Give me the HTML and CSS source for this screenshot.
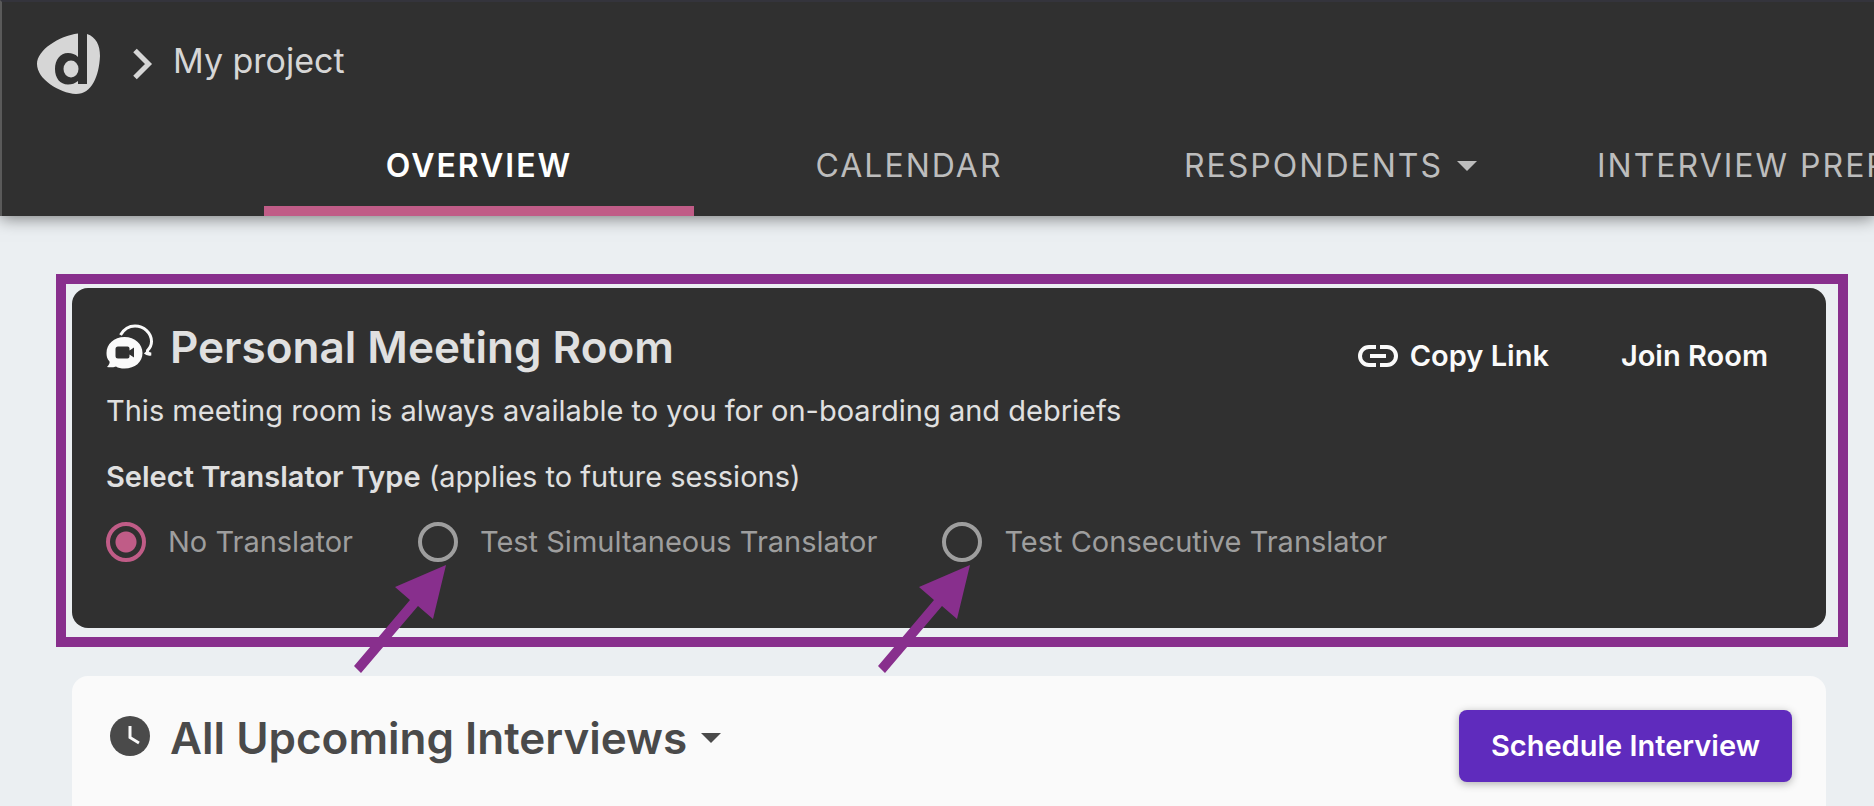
FILE: index.html
```html
<!DOCTYPE html>
<html lang="en">
<head>
    <meta charset="UTF-8">
    <meta name="viewport" content="width=device-width, initial-scale=1.0">
    <title>My project</title>
    <link rel="stylesheet" href="styles.css">
</head>
<body>
    <header class="header">
        <div class="breadcrumb">
            <a href="#" class="logo" aria-label="Home">
                <svg width="64" height="62" viewBox="0 0 64 62" fill="#d6d6d6">
                    <path d="M41 0.5V24C38 21 35 20 31 20C23 20 18 27 18 36C18 45 23 51.500 31 51.500C35 51.500 38 50.500 41 48V51H50V1C59 4 63 12 63 23C62 43 55 61 39 61C22 60 0 46 0 31C0 17 22 3 41 0.500Z"/>
                    <ellipse cx="34" cy="36" rx="7.500" ry="8.500"/>
                </svg>
            </a>
            <svg class="chevron" width="20" height="32" viewBox="0 0 20 32" fill="none" stroke="#d6d6d6" stroke-width="5">
                <path d="M2 2.500L15.500 16L2 29.500"/>
            </svg>
            <a href="#" class="project">My project</a>
        </div>
        <nav class="tabs">
            <a href="#" class="tab active">OVERVIEW</a>
            <a href="#" class="tab">CALENDAR</a>
            <a href="#" class="tab">RESPONDENTS <span class="caret"></span></a>
            <a href="#" class="tab">INTERVIEW PREP</a>
        </nav>
    </header>

    <main>
        <div class="highlight">
            <section class="room">
                <div class="room-top">
                    <h2>
                        <svg width="48" height="46" viewBox="0 0 48 46">
                            <path d="M14.500 11C18 5 23 2 29 2C38 2 45.500 9 45.500 17.500C45.500 21 44 24 41.500 26.500C41 28.500 42.500 29.500 45 30C42.500 30.500 40.500 30 39 28.500" fill="none" stroke="#fafafa" stroke-width="3"/>
                            <path d="M18.500 13C29 13 36.500 20 36.500 29C36.500 38 29 44.500 18.500 44.500C15 44.500 12 44 10 42.500C7 43.500 4 43.500 1 43C3 41 4 39 3.500 37.500C1 35 0.500 32 0.500 29C0.500 20 8 13 18.500 13Z" fill="#fafafa"/>
                            <path d="M12 22.500H21.500Q23.500 22.500 23.500 24.500V26.500L28 23.500V33.500L23.500 30.500V32.500Q23.500 34.500 21.500 34.500H12Q9.500 34.500 9.500 32V25Q9.500 22.500 12 22.500Z" fill="#303030"/>
                        </svg>
                        Personal Meeting Room
                    </h2>
                    <div class="room-actions">
                        <button type="button">
                            <svg width="40" height="22" viewBox="0 0 40 22" fill="none" stroke="#fafafa" stroke-width="4">
                                <path d="M18 2H11A9 9 0 0 0 11 20H18M22 2H29A9 9 0 0 1 29 20H22M12 11H28"/>
                            </svg>
                            Copy Link
                        </button>
                        <button type="button">Join Room</button>
                    </div>
                </div>
                <p>This meeting room is always available to you for on-boarding and debriefs</p>
                <fieldset>
                    <legend><strong>Select Translator Type</strong> (applies to future sessions)</legend>
                    <div class="options">
                        <label><input type="radio" name="translator" checked>No Translator</label>
                        <label>
                            <input type="radio" name="translator">Test Simultaneous Translator
                            <svg class="arrow" width="94" height="108" viewBox="0 0 94 108"><path d="M93 0L80 54L65 41L8 108L1 101L57 35L42 22Z" fill="#882f8d"/></svg>
                        </label>
                        <label>
                            <input type="radio" name="translator">Test Consecutive Translator
                            <svg class="arrow" width="94" height="108" viewBox="0 0 94 108"><path d="M93 0L80 54L65 41L8 108L1 101L57 35L42 22Z" fill="#882f8d"/></svg>
                        </label>
                    </div>
                </fieldset>
            </section>
        </div>

        <section class="interviews">
            <h2>
                <svg width="40" height="40" viewBox="0 0 40 40">
                    <circle cx="20" cy="20" r="20" fill="#4a4a4a"/>
                    <path d="M20 10V21.500L29 27" fill="none" stroke="#fafafa" stroke-width="3"/>
                </svg>
                All Upcoming Interviews
                <span class="caret"></span>
            </h2>
            <button type="button" class="schedule">Schedule Interview</button>
        </section>
    </main>
</body>
</html>
```
FILE: styles.css
```css
* {
    box-sizing: border-box;
}
body {
    font-family: Inter, sans-serif;
    font-size: 29px;
    line-height: 34px;
    background-color: #ebeff2;
    margin: 0;
    overflow-x: hidden;
}
a {
    color: inherit;
    text-decoration: none;
}
h2, p {
    margin: 0;
}
button {
    font: inherit;
    font-weight: 600;
    color: #fafafa;
    background: none;
    border: none;
    padding: 0;
    cursor: pointer;
}
.header {
    background-color: #303030;
    color: #d6d6d6;
    height: 216px;
    border-top: 2px solid #34343c;
    border-left: 2px solid #5a5a5a;
    box-shadow: 0 2px 16px rgba(0, 0, 0, 0.5);
    display: flex;
    flex-direction: column;
    justify-content: space-between;
}
.breadcrumb {
    display: flex;
    align-items: center;
    padding: 31px 35px 0;
    font-size: 34px;
}
.logo, .chevron {
    display: block;
}
.chevron {
    margin: 0 20px 6px 32px;
}
.project {
    padding-bottom: 12px;
}
.tabs {
    display: flex;
    padding-left: 262px;
}
.tab {
    display: flex;
    align-items: center;
    justify-content: center;
    flex: none;
    height: 102px;
    padding: 12px 60px 0;
    border-bottom: 10px solid transparent;
    font-size: 32px;
    letter-spacing: 2px;
    color: #bdbdbd;
}
.tab:nth-child(-n+2) {
    width: 430px;
}
.tab.active {
    color: #fff;
    font-weight: 600;
    border-bottom-color: #c05c87;
}
.caret {
    border: 10px solid transparent;
    border-top-color: currentColor;
    border-bottom: none;
    margin-left: 14px;
}
main {
    padding: 58px 26px 0 56px;
}
.highlight {
    border: 10px solid #882f8d;
    padding: 4px 12px 9px 6px;
}
.room {
    background-color: #303030;
    color: #e0e0e0;
    border-radius: 16px;
    padding: 34px 58px 66px 34px;
}
.room-top, .room-actions, .options, .interviews, h2, .room button {
    display: flex;
    align-items: center;
}
.room-top, .interviews {
    justify-content: space-between;
}
h2 {
    font-size: 44px;
    line-height: 50px;
    font-weight: 600;
}
h2 svg {
    margin-right: 16px;
}
.room-top {
    height: 50px;
}
.room-actions {
    gap: 72px;
    padding-top: 18px;
}
.room button {
    gap: 12px;
}
.room p {
    margin-top: 22px;
}
fieldset {
    border: none;
    margin: 32px 0 0;
    padding: 0;
}
legend {
    padding: 0;
}
strong {
    font-weight: 600;
}
.options {
    margin-top: 28px;
    gap: 65px;
    color: #9e9e9e;
}
label {
    display: flex;
    align-items: center;
    position: relative;
}
input[type="radio"] {
    appearance: none;
    width: 40px;
    height: 40px;
    margin: 0 22px 0 0;
    border: 4px solid #9e9e9e;
    border-radius: 50%;
}
input[type="radio"]:checked {
    border-color: #c05c87;
    background: radial-gradient(circle, #c05c87 10px, transparent 11px);
}
.arrow {
    position: absolute;
    left: -65px;
    top: 43px;
}
.interviews {
    align-items: flex-start;
    background-color: #fafafa;
    color: #4a4a4a;
    border-radius: 16px;
    margin: 29px 22px 0 16px;
    padding: 34px 34px 60px 38px;
}
.interviews h2 {
    line-height: 56px;
}
.interviews h2 svg {
    margin: 0 20px 4px 0;
}
.schedule {
    height: 72px;
    padding: 0 32px;
    border-radius: 8px;
    background-color: #5f2bbd;
    color: #fff;
    box-shadow: 0 2px 8px rgba(0, 0, 0, 0.3);
}
```
